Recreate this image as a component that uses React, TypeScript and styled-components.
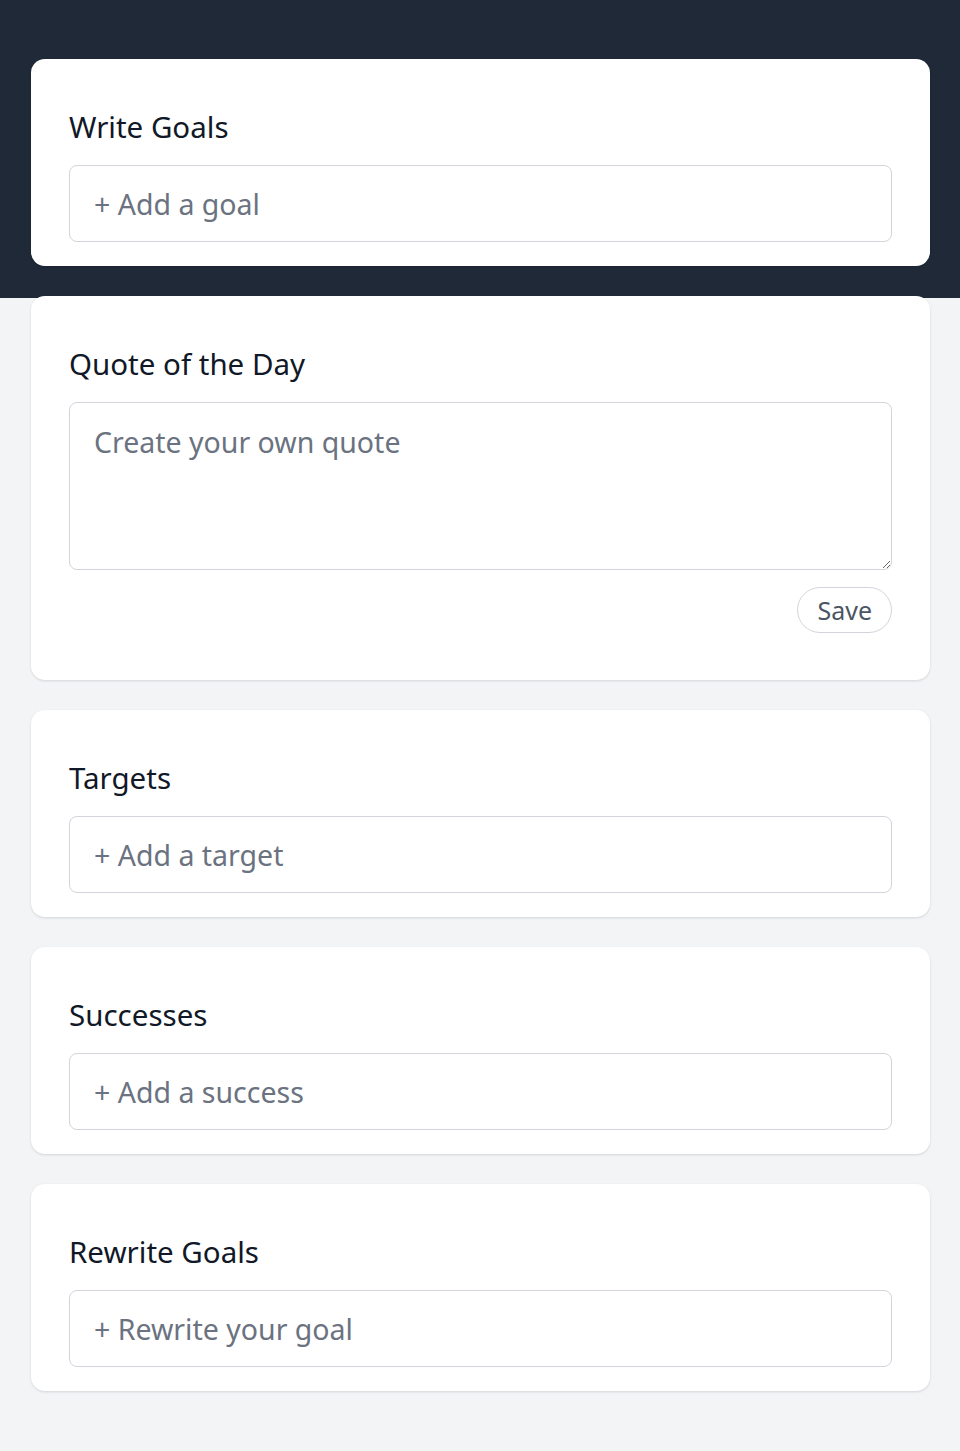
import React from 'react';
import styled, { createGlobalStyle } from 'styled-components';

const GlobalStyle = createGlobalStyle`
    html, body {
        margin: 0;
        padding: 0;
        background: #f3f4f6;
        font-family: 'Noto Sans', 'Open Sans', sans-serif;
    }
    * {
        box-sizing: border-box;
    }
`;

const Page = styled.div`
    min-height: 1451px;
    background: #f3f4f6;
`;

const Header = styled.div`
    background: #1f2937;
    height: 298px;
    padding: 59px 30px 0 31px;
`;

const CardList = styled.div`
    display: flex;
    flex-direction: column;
    gap: 30px;
    padding: 0 30px 40px 31px;
    margin-top: -2px;
`;

const Card = styled.section`
    background: #ffffff;
    border-radius: 14px;
    padding: 48px 38px 24px;
    box-shadow: 0 1px 3px rgba(15, 23, 42, 0.09), 0 1px 2px rgba(15, 23, 42, 0.05);
`;

const Title = styled.h2`
    margin: 0 0 18px;
    font-size: 29.5px;
    line-height: 40px;
    font-weight: 400;
    color: #111827;
`;

const Field = styled.input`
    display: block;
    width: 100%;
    height: 77px;
    padding: 0 24px;
    border: 1.5px solid #d1d5db;
    border-radius: 8px;
    background: #ffffff;
    font-family: inherit;
    font-size: 28.5px;
    color: #111827;
    outline: none;

    &::placeholder {
        color: #6b7280;
    }
`;

const Area = styled.textarea`
    display: block;
    width: 100%;
    height: 168px;
    padding: 19px 24px;
    border: 1.5px solid #d1d5db;
    border-radius: 8px;
    background: #ffffff;
    font-family: inherit;
    font-size: 28.5px;
    line-height: 40px;
    color: #111827;
    outline: none;
    resize: vertical;

    &::placeholder {
        color: #6b7280;
    }
`;

const Actions = styled.div`
    display: flex;
    justify-content: flex-end;
    margin: 17px 0 23px;
`;

const SaveButton = styled.button`
    height: 46px;
    padding: 0 19px;
    border: 1.5px solid #d1d5db;
    border-radius: 999px;
    background: #ffffff;
    font-family: inherit;
    font-size: 25px;
    color: #4b5563;
    cursor: pointer;
`;

type EntryCardProps = {
    title: string;
    placeholder: string;
};

function EntryCard({ title, placeholder }: EntryCardProps) {
    return (
        <Card>
            <Title>{title}</Title>
            <Field placeholder={placeholder} />
        </Card>
    );
}

export default function App() {
    return (
        <Page>
            <GlobalStyle />
            <Header>
                <EntryCard title="Write Goals" placeholder="+ Add a goal" />
            </Header>
            <CardList>
                <Card>
                    <Title>Quote of the Day</Title>
                    <Area placeholder="Create your own quote" />
                    <Actions>
                        <SaveButton>Save</SaveButton>
                    </Actions>
                </Card>
                <EntryCard title="Targets" placeholder="+ Add a target" />
                <EntryCard title="Successes" placeholder="+ Add a success" />
                <EntryCard title="Rewrite Goals" placeholder="+ Rewrite your goal" />
            </CardList>
        </Page>
    );
}
